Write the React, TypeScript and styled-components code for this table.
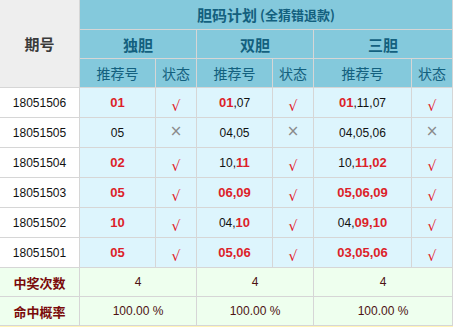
import { Fragment } from "react"
import styled, { createGlobalStyle } from "styled-components"

const GlobalStyle = createGlobalStyle`
  html, body {
    margin: 0;
    padding: 0;
    background: #ffffff;
  }
  body {
    font-family: "Liberation Sans", "Noto Sans CJK SC", sans-serif;
  }
`

const Page = styled.div`
  width: 453px;
`

const Grid = styled.div`
  display: grid;
  grid-template-columns: 79px 75px 40px 75px 40px 97px 40px;
  grid-template-rows: 29px 28px 28px repeat(6, 29px) 28px 28px;
  gap: 1px;
  padding: 0 1px 1px 0;
  background: #d6d6d6;
`

const Cell = styled.div<{ $span?: number; $rows?: number }>`
  display: flex;
  align-items: center;
  justify-content: center;
  grid-column: span ${({ $span }) => $span ?? 1};
  grid-row: span ${({ $rows }) => $rows ?? 1};
  white-space: nowrap;
`

const CornerHead = styled(Cell)`
  background: #eeeeee;
  color: #3a3a3a;
  font-family: "Noto Sans CJK SC", sans-serif;
  font-size: 15px;
  font-weight: bold;
`

const HeadCell = styled(Cell)<{ $sub?: boolean }>`
  background: #84c9dc;
  color: #13607e;
  font-family: "Noto Sans CJK SC", sans-serif;
  font-size: ${({ $sub }) => ($sub ? "14px" : "15px")};
  font-weight: ${({ $sub }) => ($sub ? "normal" : "bold")};
`

const Note = styled.span`
  font-size: 13px;
  font-weight: bold;
  margin-left: 3px;
`

const IssueCell = styled(Cell)`
  background: #ffffff;
  color: #111111;
  font-size: 12px;
`

const DataCell = styled(Cell)`
  background: #ddf5fd;
  color: #111111;
  font-size: 12px;
`

const Num = styled.span<{ $hit?: boolean }>`
  color: ${({ $hit }) => ($hit ? "#dc1f2a" : "#111111")};
  font-weight: ${({ $hit }) => ($hit ? "bold" : "normal")};
  font-size: ${({ $hit }) => ($hit ? "13px" : "12px")};
`

const Mark = styled.span<{ $ok: boolean }>`
  font-family: "DejaVu Sans", sans-serif;
  color: ${({ $ok }) => ($ok ? "#e3141e" : "#8a8a8a")};
  font-size: ${({ $ok }) => ($ok ? "14px" : "15px")};
  position: relative;
  top: ${({ $ok }) => ($ok ? "3px" : "-2px")};
`

const SumLabel = styled(Cell)`
  background: #eeffee;
  color: #7a0a0a;
  font-family: "Noto Sans CJK SC", sans-serif;
  font-size: 13px;
  font-weight: bold;
`

const SumValue = styled(Cell)`
  background: #eeffee;
  color: #4d1212;
  font-size: 12px;
`

const BottomStrip = styled.div`
  height: 1px;
  background: #fff4b8;
`

type Pick = { nums: string[]; hits: boolean[]; ok: boolean }

type Row = {
  issue: string
  picks: [Pick, Pick, Pick]
}

const rows: Row[] = [
  {
    issue: "18051506",
    picks: [
      { nums: ["01"], hits: [true], ok: true },
      { nums: ["01", "07"], hits: [true, false], ok: true },
      { nums: ["01", "11", "07"], hits: [true, false, false], ok: true },
    ],
  },
  {
    issue: "18051505",
    picks: [
      { nums: ["05"], hits: [false], ok: false },
      { nums: ["04", "05"], hits: [false, false], ok: false },
      { nums: ["04", "05", "06"], hits: [false, false, false], ok: false },
    ],
  },
  {
    issue: "18051504",
    picks: [
      { nums: ["02"], hits: [true], ok: true },
      { nums: ["10", "11"], hits: [false, true], ok: true },
      { nums: ["10", "11", "02"], hits: [false, true, true], ok: true },
    ],
  },
  {
    issue: "18051503",
    picks: [
      { nums: ["05"], hits: [true], ok: true },
      { nums: ["06", "09"], hits: [true, true], ok: true },
      { nums: ["05", "06", "09"], hits: [true, true, true], ok: true },
    ],
  },
  {
    issue: "18051502",
    picks: [
      { nums: ["10"], hits: [true], ok: true },
      { nums: ["04", "10"], hits: [false, true], ok: true },
      { nums: ["04", "09", "10"], hits: [false, true, true], ok: true },
    ],
  },
  {
    issue: "18051501",
    picks: [
      { nums: ["05"], hits: [true], ok: true },
      { nums: ["05", "06"], hits: [true, true], ok: true },
      { nums: ["03", "05", "06"], hits: [true, true, true], ok: true },
    ],
  },
]

function Numbers({ pick }: { pick: Pick }) {
  return (
    <>
      {pick.nums.map((n, i) => (
        <span key={i}>
          {i > 0 && <Num $hit={pick.hits[i] && pick.hits[i - 1]}>,</Num>}
          <Num $hit={pick.hits[i]}>{n}</Num>
        </span>
      ))}
    </>
  )
}

export default function App() {
  return (
    <Page>
      <GlobalStyle />
      <Grid>
        <CornerHead $rows={3}>期号</CornerHead>
        <HeadCell $span={6}>
          胆码计划<Note>(全猜错退款)</Note>
        </HeadCell>

        <HeadCell $span={2}>独胆</HeadCell>
        <HeadCell $span={2}>双胆</HeadCell>
        <HeadCell $span={2}>三胆</HeadCell>

        <HeadCell $sub>推荐号</HeadCell>
        <HeadCell $sub>状态</HeadCell>
        <HeadCell $sub>推荐号</HeadCell>
        <HeadCell $sub>状态</HeadCell>
        <HeadCell $sub>推荐号</HeadCell>
        <HeadCell $sub>状态</HeadCell>

        {rows.map((row) => (
          <Fragment key={row.issue}>
            <IssueCell>{row.issue}</IssueCell>
            {row.picks.map((pick, i) => (
              <Fragment key={i}>
                <DataCell>
                  <Numbers pick={pick} />
                </DataCell>
                <DataCell>
                  <Mark $ok={pick.ok}>{pick.ok ? "√" : "×"}</Mark>
                </DataCell>
              </Fragment>
            ))}
          </Fragment>
        ))}

        <SumLabel>中奖次数</SumLabel>
        <SumValue $span={2}>4</SumValue>
        <SumValue $span={2}>4</SumValue>
        <SumValue $span={2}>4</SumValue>

        <SumLabel>命中概率</SumLabel>
        <SumValue $span={2}>100.00 %</SumValue>
        <SumValue $span={2}>100.00 %</SumValue>
        <SumValue $span={2}>100.00 %</SumValue>
      </Grid>
      <BottomStrip />
    </Page>
  )
}
